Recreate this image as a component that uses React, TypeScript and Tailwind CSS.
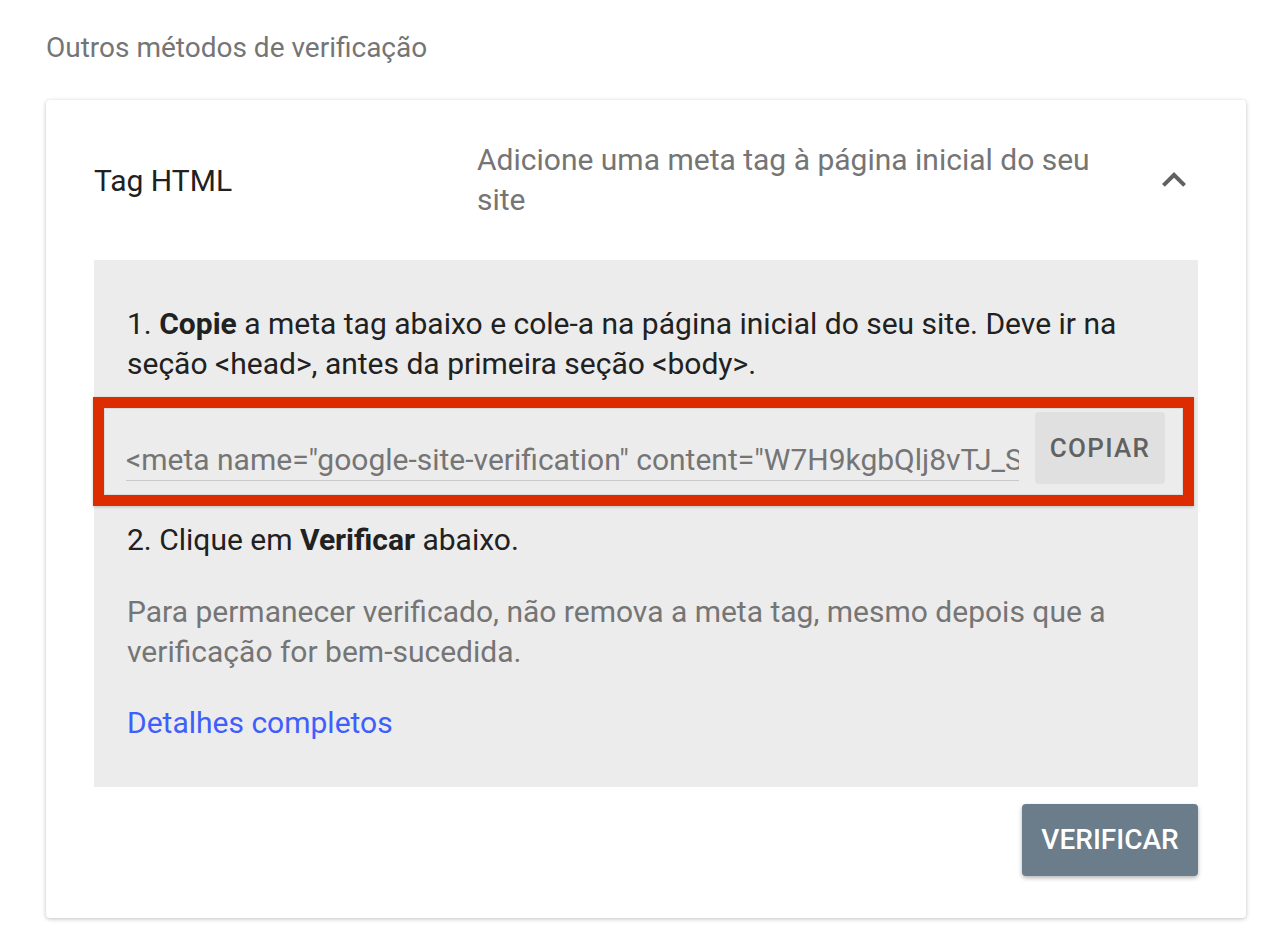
const font = { fontFamily: "Roboto, 'Noto Sans', sans-serif" };

function ExpandLess() {
  return (
    <svg viewBox="0 0 24 24" className="h-12 w-12 shrink-0" fill="#616161">
      <path d="M12 8l-6 6 1.41 1.41L12 10.83l4.59 4.58L18 14z" />
    </svg>
  );
}

export default function App() {
  return (
    <div className="min-h-[932px] bg-white pt-[30px] pr-[34px] pb-6 pl-[46px]" style={font}>
      <h2 className="text-[28px] leading-[36px] text-[#757575]">Outros métodos de verificação</h2>

      <div className="mt-[34px] rounded-[4px] bg-white px-12 pb-[42px] shadow-[0_1px_4px_rgba(0,0,0,0.25)]">
        {/* header */}
        <div className="flex h-[160px] items-center">
          <div className="w-[383px] text-[30px] text-[#212121]">Tag HTML</div>
          <div className="w-[630px] text-[30px] leading-[40px] text-[#757575]">
            Adicione uma meta tag à página inicial do seu site
          </div>
          <div className="flex-1" />
          <ExpandLess />
        </div>

        {/* instructions */}
        <div className="bg-[#ececec] px-[33px] pt-[44px] pb-[44px] text-[30px] leading-[40px] text-[#212121]">
          <p>
            1. <b className="font-bold">Copie</b> a meta tag abaixo e cole-a na página inicial do seu site. Deve ir na
            seção &lt;head&gt;, antes da primeira seção &lt;body&gt;.
          </p>

          {/* highlighted copy field */}
          <div className="mt-[13px] mr-[-29px] ml-[-34px] flex items-end gap-4 border-[11px] border-[#dd2c00] pt-[4px] pr-[18px] pb-[11px] pl-[22px] shadow-[0_1px_3px_rgba(0,0,0,0.2),inset_0_0_0_1px_rgba(0,0,0,0.08)]">
            <div className="mb-[3px] h-[41px] flex-1 overflow-hidden whitespace-nowrap border-b border-[#c8c8c8] text-[#757575]">
              &lt;meta name="google-site-verification" content="W7H9kgbQlj8vTJ_SxR2nLk0pWq4mZ9yHc3aB7dEfG1s" /&gt;
            </div>
            <button className="h-[72px] w-[130px] shrink-0 rounded-[4px] bg-[#e0e0e0] text-[26px] leading-none font-medium tracking-[0.05em] text-[#616161]">
              COPIAR
            </button>
          </div>

          <p className="mt-[14px]">
            2. Clique em <b className="font-bold">Verificar</b> abaixo.
          </p>

          <p className="mt-[32px] text-[#757575]">
            Para permanecer verificado, não remova a meta tag, mesmo depois que a verificação for bem-sucedida.
          </p>

          <a className="mt-[31px] block text-[#3f5efb]">Detalhes completos</a>
        </div>

        <div className="mt-[17px] flex justify-end">
          <button className="h-[72px] w-[176px] rounded-[4px] bg-[#6b7c8a] text-[28px] leading-none font-medium text-white shadow-[0_2px_4px_rgba(0,0,0,0.3)]">
            VERIFICAR
          </button>
        </div>
      </div>
    </div>
  );
}
